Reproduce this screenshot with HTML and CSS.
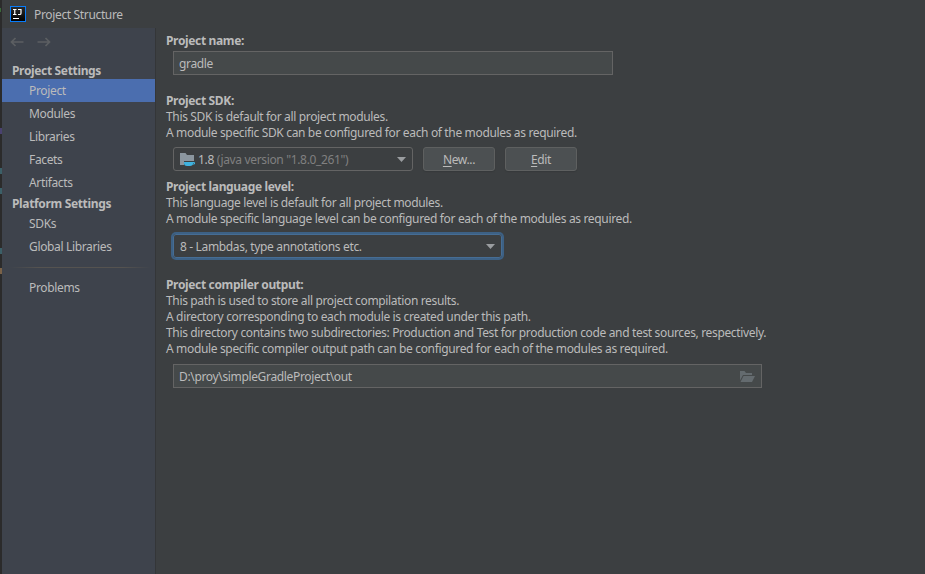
FILE: index.html
```html
<!DOCTYPE html>
<html lang="en">
<head>
<meta charset="utf-8">
<title>Project Structure</title>
<link rel="stylesheet" href="styles.css">
</head>
<body>
<div class="editor-edge"></div>
<div class="dialog">
  <header class="titlebar">
    <svg class="logo" width="16" height="16" viewBox="0 0 16 16">
      <defs><linearGradient id="lg" x1="0" y1="0" x2="0" y2="1"><stop offset="0" stop-color="#2c2c2c"/><stop offset="1" stop-color="#000"/></linearGradient></defs>
      <rect x=".5" y=".5" width="15" height="15" fill="url(#lg)" stroke="#087cfa"/>
      <path d="M3 3.500h3.500M3 8.500h3.500M4.750 3.500v5M8 3.500h3v3.700q0 1.300-1.300 1.300H8" fill="none" stroke="#fff" stroke-width="1.2"/>
      <path d="M3 12.500h6" stroke="#fff"/>
    </svg>
    <h1>Project Structure</h1>
  </header>
  <div class="body">
    <nav class="sidebar">
      <div class="history">
        <svg width="14" height="10" viewBox="0 0 14 10"><path d="M13.500 5H1.500M5.500 1L1.500 5l4 4"/></svg>
        <svg width="14" height="10" viewBox="0 0 14 10"><path d="M.5 5h12M8.500 1l4 4-4 4"/></svg>
      </div>
      <h2>Project Settings</h2>
      <ul>
        <li class="selected">Project</li>
        <li>Modules</li>
        <li>Libraries</li>
        <li>Facets</li>
        <li>Artifacts</li>
      </ul>
      <h2 class="platform">Platform Settings</h2>
      <ul>
        <li>SDKs</li>
        <li>Global Libraries</li>
      </ul>
      <div class="separator"></div>
      <ul>
        <li>Problems</li>
      </ul>
    </nav>
    <main>
      <section>
        <h3>Project name:</h3>
        <div class="field name-field">gradle</div>
      </section>
      <section class="sdk">
        <h3>Project SDK:</h3>
        <p>This SDK is default for all project modules.</p>
        <p>A module specific SDK can be configured for each of the modules as required.</p>
        <div class="row">
          <div class="combo sdk-combo">
            <svg class="sdk-icon" width="16" height="14" viewBox="0 0 16 14">
              <path d="M0 0h5.500l1.500 2h7v6H4v4H0z" fill="#8b969f"/>
              <path d="M4 9h9v1q0 3-3 3H7q-3 0-3-3z" fill="#3fb3e0"/>
              <path d="M12.500 9.500h2v1.500h-2.500" fill="none" stroke="#3fb3e0"/>
            </svg>
            <span>1.8 <span class="version">(java version "1.8.0_261")</span></span>
            <svg class="arrow" width="9" height="5" viewBox="0 0 9 5"><path d="M0 0h9L4.500 5z"/></svg>
          </div>
          <div class="button"><span><u>N</u>ew...</span></div>
          <div class="button"><span><u>E</u>dit</span></div>
        </div>
      </section>
      <section class="level">
        <h3>Project language level:</h3>
        <p>This language level is default for all project modules.</p>
        <p>A module specific language level can be configured for each of the modules as required.</p>
        <div class="combo level-combo">
          <span>8 - Lambdas, type annotations etc.</span>
          <svg class="arrow" width="9" height="5" viewBox="0 0 9 5"><path d="M0 0h9L4.500 5z"/></svg>
        </div>
      </section>
      <section class="output">
        <h3>Project compiler output:</h3>
        <p>This path is used to store all project compilation results.</p>
        <p>A directory corresponding to each module is created under this path.</p>
        <p>This directory contains two subdirectories: Production and Test for production code and test sources, respectively.</p>
        <p>A module specific compiler output path can be configured for each of the modules as required.</p>
        <div class="field path-field">
          <span>D:\proy\simpleGradleProject\out</span>
          <svg width="15" height="11" viewBox="0 0 15 11"><path d="M0 0h4.500l1.500 2h6v2H3L0 9.500z"/><path d="M3.500 5H15l-3 6H.5z"/></svg>
        </div>
      </section>
    </main>
  </div>
</div>
</body>
</html>
```
FILE: styles.css
```css
* { box-sizing: border-box; }

body {
  margin: 0;
  width: 925px;
  height: 574px;
  display: flex;
  overflow: hidden;
  background: #3c3f41;
  color: #bbbbbb;
  font: 12px/16px "Noto Sans", "Open Sans", sans-serif;
  letter-spacing: -0.345px;
}

h1, h2, h3, p, ul { margin: 0; padding: 0; font-size: inherit; white-space: nowrap; }
ul { list-style: none; }
svg { display: block; flex: none; }

.editor-edge {
  width: 2px;
  background:
    linear-gradient(#3a6a3a, #3a6a3a) 0 8px / 1px 4px no-repeat,
    linear-gradient(#4a4270, #4a4270) 0 128px / 2px 6px no-repeat,
    linear-gradient(#3c6068, #3c6068) 0 168px / 2px 6px no-repeat,
    linear-gradient(#3c6068, #3c6068) 0 188px / 2px 6px no-repeat,
    linear-gradient(#3c6068, #3c6068) 0 248px / 2px 6px no-repeat,
    linear-gradient(#7a6248, #7a6248) 0 268px / 2px 6px no-repeat,
    #2b2b2b;
}

.dialog { flex: 1; display: flex; flex-direction: column; }

.titlebar {
  height: 28px;
  padding-left: 8px;
  display: flex;
  align-items: center;
  gap: 8px;
}
.titlebar h1 { font-weight: 400; padding-top: 1px; }

.body { flex: 1; display: flex; }

.sidebar {
  width: 154px;
  background: #3e434c;
  border-right: 1px solid #343638;
}
.history {
  height: 35px;
  padding: 9px 0 0 8px;
  display: flex;
  gap: 13px;
}
.history path { fill: none; stroke: #5c5f62; stroke-width: 1.7; }
.sidebar h2 { height: 16px; padding-left: 10px; line-height: 16px; }
.sidebar .platform { height: 18px; line-height: 20px; }
.sidebar li { height: 23px; padding-left: 27px; line-height: 24px; }
.sidebar .selected { background: #4b6eaf; }
.separator {
  height: 1px;
  margin: 9px 4px 8px 8px;
  background: linear-gradient(90deg, transparent, #555350 20%, #555350 80%, transparent);
}

main { padding: 5px 0 0 10px; }

.field, .combo {
  height: 24px;
  margin-left: 7px;
  padding: 0 6px 0 5px;
  border: 1px solid #646464;
  display: flex;
  align-items: center;
}
.field { background: #45494a; }
.name-field { width: 440px; margin-top: 2px; padding-top: 2px; }
.field > span, .combo > span, .button > span { padding-top: 2px; }
.sdk { margin-top: 18px; }
.row { display: flex; gap: 10px; margin-top: 6px; }
.combo { border-radius: 3px; }
.sdk-combo { width: 240px; }
.sdk-icon { margin: 1px 2px 0 1px; }
.version { color: #808080; }
.arrow { margin-left: auto; }
.arrow path { fill: #9a9da0; }
.button {
  width: 72px;
  height: 24px;
  border: 1px solid #5e6060;
  border-radius: 3px;
  background: #4c5052;
  box-shadow: 0 1px 1px #36393b;
  display: flex;
  align-items: center;
  justify-content: center;
}
.button u { text-underline-offset: 2px; }
.level { margin-top: 8px; }
.level-combo {
  width: 329px;
  margin-top: 7px;
  padding-left: 6px;
  border-color: #466d94;
  box-shadow: 0 0 0 2px #3d6185;
}
.output { margin-top: 19px; }
.path-field { width: 589px; margin-top: 7px; }
.path-field svg { margin-left: auto; }
.path-field path { fill: #646b6f; }
```
